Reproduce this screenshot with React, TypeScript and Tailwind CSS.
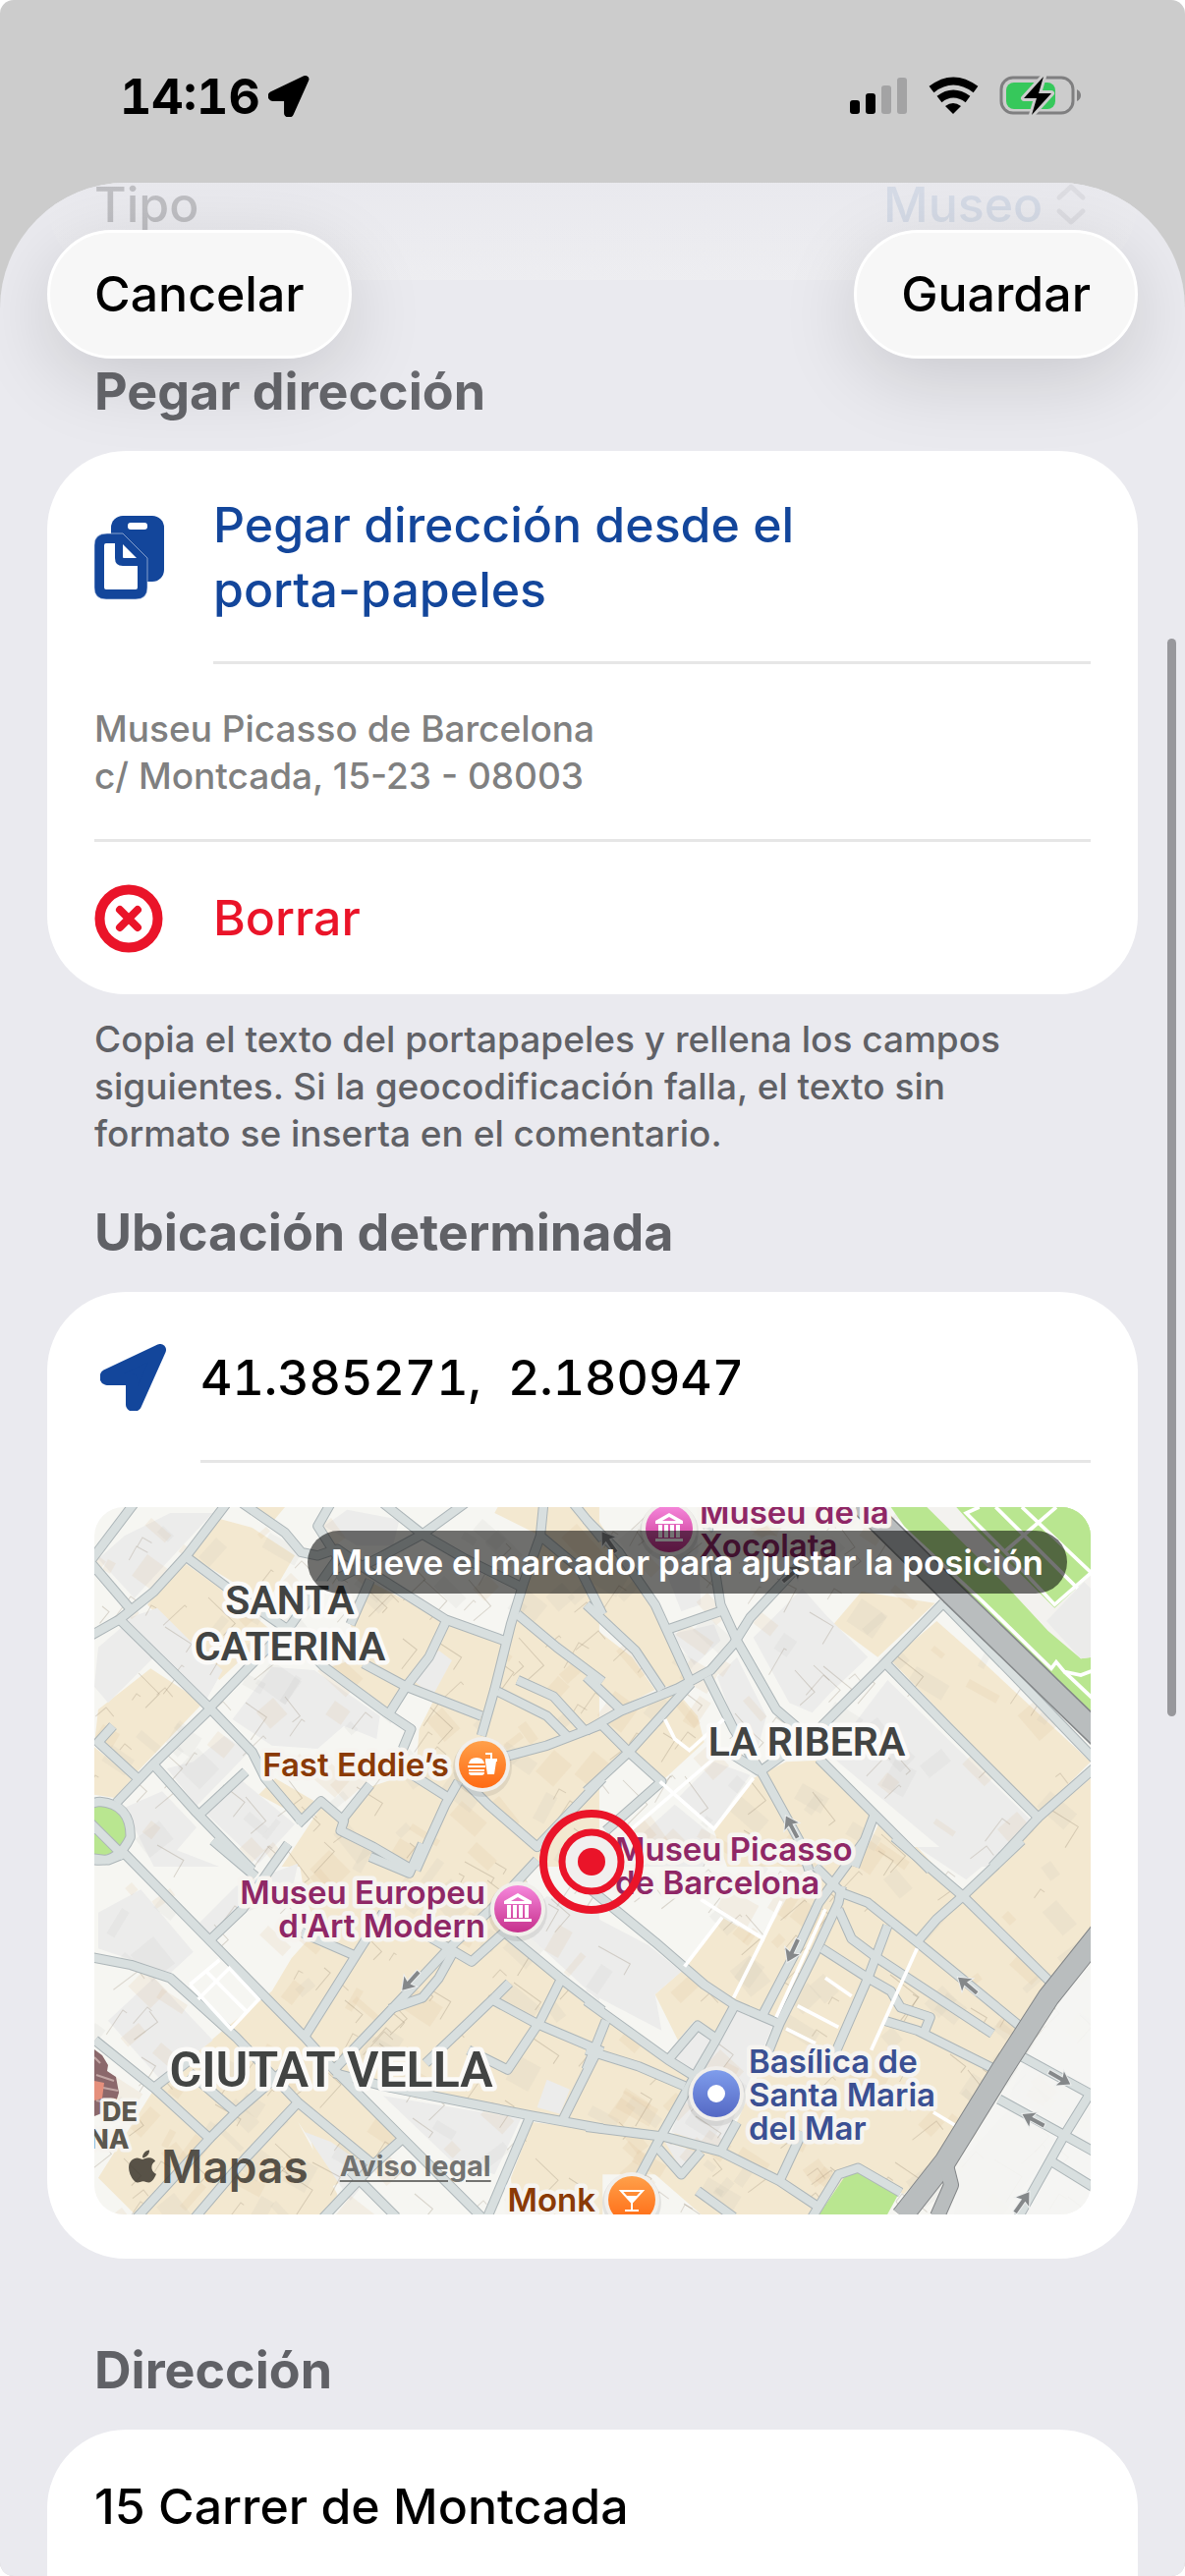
import type { ReactNode } from "react";
import { FaApple } from "react-icons/fa";

interface MapTile {
  x: number;
  y: number;
  blocks: string[];
  grey: string[];
  roads: string[];
  paths: string[];
}

// The map is drawn as four tiles, each in thirds of a map unit
const TILES: MapTile[] = [
  {
    x: -6,
    y: -14,
    blocks: [
      "M390 75 L500 105 L630 190 L545 335 L310 190Z",
      "M290 210 L430 310 L560 420 L400 570 L180 340Z",
      "M190 535 L350 640 L150 850 L20 750 L30 660Z",
      "M18 775 L135 870 L80 930 L18 920Z",
      "M870 275 L1090 390 L1260 460 L1380 130 L1240 60 L1250 42 H1560 V1140 H590 L715 950 L775 985 L850 900 L1000 850 L1010 720 L1060 620 L970 590 L920 660 L740 530 L830 500 L800 400Z",
      "M570 870 L690 940 L650 990 L520 920Z",
      "M500 42 H600 L560 90Z",
    ],
    grey: [
      "M560 530 L690 540 L890 680 L880 750 L780 710 L700 780 L560 770 L440 690Z",
      "M110 130 L250 60 L380 60 L250 200 L140 320 L30 200Z",
      "M110 385 L210 350 L310 450 L410 540 L360 630Z",
      "M30 470 L100 410 L200 500 L60 640 L18 590Z",
      "M320 820 L415 740 L490 790 L330 955 L240 840Z",
      "M110 960 L225 910 L330 1020 L270 1090 L400 1140 H200Z",
      "M350 970 L460 870 L630 1010 L520 1130Z",
      "M980 560 L1070 480 L1110 510 L1050 620Z",
      "M720 100 L790 50 L950 80 L930 160 L820 160Z",
    ],
    roads: [
      "M0 215 L140 30",
      "M-20 450 L95 385 L200 300 L300 190 L430 20",
      "M10 215 L125 350",
      "M95 385 L370 655 L500 790 L540 870 L650 1000",
      "M300 195 L420 285 L600 410 L720 530 L910 670 L985 720 L960 780",
      "M370 655 L500 520 L620 400 L690 300 L760 200",
      "M370 660 L200 825 L85 945",
      "M200 830 L330 975 L500 1150",
      "M340 980 L480 850",
      "M75 710 L30 760 L150 870",
      "M470 30 L600 120 L650 180 L700 190 L760 170 L860 240 L1090 385 L1270 450",
      "M860 265 L800 400",
      "M900 30 L1020 125 L1150 30",
      "M760 260 L900 190 L1020 125 L1150 200 L1320 285",
      "M740 30 L700 100 L770 210",
      "M1390 30 L1380 130 L1330 270 L1290 400 L1240 600 L1200 740",
      "M1090 395 L1040 500 L970 590 L920 670",
      "M840 520 L970 590 L1200 680",
      "M1310 370 L1430 470 L1570 575",
      "M1250 605 L1400 680 L1470 750",
      "M1310 570 L1420 620 L1520 730",
      "M1250 810 L1400 770 L1570 705",
      "M1130 880 L1090 950 L1040 1060 L1000 1150",
      "M1150 880 L1220 950 L1370 1080 L1570 870",
      "M990 860 L1100 930",
      "M640 1010 L710 940 L780 1000 L770 1030 L870 1080 L990 1150",
      "M780 990 L860 890",
      "M1380 130 L1500 230 L1570 370",
      "M1480 30 L1570 140",
      "M-40 1110 Q-60 950 35 942 Q130 950 128 1050 Q90 1130 18 1120",
      "M0 1000 L110 1110",
    ],
    paths: [],
  },
  {
    x: 504,
    y: -14,
    blocks: [
      "M0 42 L90 180 L200 340 L310 580 L230 590 L140 460 L0 330Z",
      "M0 400 L130 500 L200 600 L100 650 L0 570Z",
      "M0 720 L270 610 L330 680 L350 760 L220 880 L110 800 L0 900Z",
      "M745 400 L830 300 L1055 335 L880 500Z",
      "M920 510 L1060 390 L1190 505 L1530 820 L1370 980Z",
      "M540 850 L600 820 L700 815 L865 980 L800 1140 H420 L380 1030 L500 870Z",
      "M885 1005 L1010 1140 H820Z",
      "M1375 1000 L1530 870 V1140 H1250Z",
    ],
    grey: [
      "M910 570 L1350 1000 L1230 1140 H1140 L735 800Z",
      "M500 440 L650 290 L720 370 L850 500 L735 610 L680 670 L610 640Z",
      "M250 430 L380 400 L400 450 L320 525Z",
      "M390 560 L450 500 L540 680 L500 830 L440 700Z",
      "M270 930 L380 820 L490 860 L380 1020Z",
      "M150 1050 L260 950 L370 1040 L350 1140 H150Z",
      "M190 130 L330 130 L340 340 L280 360Z",
    ],
    roads: [
      "M-10 340 L140 480 L220 600",
      "M-10 560 L95 660",
      "M-10 725 L95 665 L270 595 L370 540 L440 460 L490 380 L640 220",
      "M-10 80 L90 180 L200 340 L310 580",
      "M240 415 L400 360",
      "M350 30 L400 340 L450 450 L570 660 L640 720",
      "M360 560 L440 720 L530 860 L640 1060 L670 1150",
      "M-10 910 L120 790 L310 580",
      "M40 710 L120 790 L220 880 L50 1030",
      "M1080 335 L900 520 L700 720 L520 850",
      "M440 800 L520 850",
      "M1080 335 L1300 560 L1540 810",
      "M905 520 L1100 720 L1370 990 L1540 840",
      "M700 810 L870 980 L1040 1150",
      "M1370 990 L1230 1140",
      "M870 980 L810 1140",
    ],
    paths: [
      "M230 690 L260 750 L305 785 L410 690",
      "M215 880 L380 1025 L500 870",
      "M100 1050 L380 810",
    ],
  },
  {
    x: -6,
    y: 346,
    blocks: [
      "M640 20 L720 0 H1380 L1270 260 L1440 400 L1570 500 V860 L1350 820 L900 720 L750 690 L950 880 L870 970 L720 1050 L680 900 L640 840 L760 1060 L740 1140 H160 L30 1010 L200 740 L410 560 L560 440 L620 340 L700 250 L660 150Z",
      "M1355 840 L1570 865 V1140 H1300 L1290 1010Z",
    ],
    grey: [
      "M330 240 L450 120 L640 50 L620 140 L480 200 L380 290Z",
      "M30 200 L160 130 L320 320 L250 385 L30 310Z",
      "M60 530 L200 400 L380 590 L220 710Z",
      "M1310 240 L1400 150 L1560 200 V470Z",
      "M900 760 L1320 830 L1240 1000 L1110 960Z",
      "M1400 710 L1470 740 L1440 815 L1370 795Z",
      "M660 870 L740 900 L870 990 L800 1080Z",
    ],
    roads: [
      "M-20 30 L60 40 L110 20 L370 285 L660 580 L750 680 L950 880 L1220 1150",
      "M0 335 L130 360 L250 400 L450 580 L640 780 L870 970 L960 890",
      "M370 285 L470 190 L560 60 L610 -10",
      "M380 -20 L510 90",
      "M660 580 L830 310 L900 200",
      "M650 260 L810 330",
      "M750 680 L950 470 L1100 310 L1240 180 L1370 40",
      "M860 30 L980 80 L1020 -10",
      "M920 495 L1020 460 L1070 400 L1120 310",
      "M1000 250 L1170 350 L1270 260 L1440 400 L1570 500",
      "M1030 660 L1240 460 L1285 415",
      "M1240 470 L1370 540 L1570 625",
      "M1440 410 L1380 530 L1280 680 L1160 620",
      "M750 690 L900 730 L1350 820 L1570 860",
      "M1350 820 L1210 1150",
      "M1555 620 L1450 830",
      "M20 590 L200 735 L370 890 L140 1140",
      "M200 735 L310 650",
      "M310 690 L450 810 L600 680",
      "M450 810 L370 890",
      "M640 780 L480 950 L310 1150",
      "M870 970 L700 1150",
      "M800 990 L940 1130",
    ],
    paths: [
      "M310 420 L400 345 M335 465 L430 370 L520 465 L435 555 L310 420",
      "M360 380 L480 500",
    ],
  },
  {
    x: 504,
    y: 346,
    blocks: [
      "M405 215 L530 285 L600 160 L700 70 L840 0 H1000 L1140 150 L1310 0 H1540 V230 L1400 430 L1060 960 L960 1060 L800 980 L690 1130 H350 L200 1000 L-10 1000 V480 L240 650 L330 700 L230 880 L450 840 L540 640 L580 540 L440 480 L290 370Z",
      "M200 450 L280 380 L430 485 L390 570 L320 530 L270 590Z",
    ],
    grey: [
      "M450 495 L560 545 L400 920 L250 870 L300 740Z",
      "M-10 200 L180 300 L280 380 L200 450 L220 560 L-10 440Z",
      "M230 900 L340 935 L280 985Z",
      "M250 650 L330 555 L370 590 L310 690Z",
      "M1290 790 L1430 900 L1250 1140 H1110 L1130 960Z",
      "M1330 660 L1510 750 L1450 860 L1280 760Z",
      "M1000 0 H1270 L1150 100Z",
    ],
    roads: [
      "M-70 70 L200 290 L350 420 L440 480 L580 540",
      "M-10 470 L240 650 L320 700",
      "M240 650 L330 545 L380 580",
      "M-10 620 L150 670 L290 730",
      "M50 530 L-10 680",
      "M440 490 L380 600 L310 720 L220 880 L140 1030",
      "M530 510 L640 300 L700 170 L840 -20",
      "M540 640 L580 540 L690 320 L760 170 L770 120",
      "M690 60 L770 140 L850 170 L1000 290 L1330 560",
      "M930 -30 L1140 150 L1420 425",
      "M1320 -20 L1140 150 L1060 220 L1000 290",
      "M760 190 L800 280 L880 340 L1230 570",
      "M710 310 L850 400 L920 440 L950 490 L1040 520 L1020 570",
      "M910 240 L850 400 L750 630",
      "M900 530 L1000 560 L1240 680",
      "M-10 855 L230 885 L400 930 L580 1020 L700 1100",
      "M400 930 L450 840",
      "M210 920 L280 1000 L340 930",
      "M580 1020 L650 870",
      "M330 1050 L440 1130",
      "M680 1130 L760 1000 L820 980 L950 1055",
      "M1320 640 L1540 760",
      "M1250 770 L1450 880 L1540 930",
      "M1530 750 L1450 880 L1310 1130",
      "M1410 960 L1540 1040",
    ],
    paths: [
      "M340 160 L530 280 L585 165 M405 215 L290 365",
      "M530 280 L440 460",
      "M720 190 L570 520",
      "M720 400 L800 455 M635 485 L760 550 M600 555 L690 600",
      "M1000 310 L860 620",
      "M1050 810 L1125 855",
    ],
  },
];

// x, y and heading of the one-way arrows
const ARROWS = [
  [710, 326, -28],
  [524, 36, -35],
  [710, 68, 50],
  [322, 482, 222],
  [711, 451, 205],
  [889, 487, -50],
  [982, 581, 120],
  [956, 624, -62],
  [944, 708, 35],
];

// Small building outlines, spread with a fixed seed so they never jump
function makeParcels(count: number) {
  let seed = 41385;
  const next = () => {
    seed = (seed * 16807) % 2147483647;
    return seed / 2147483647;
  };
  return Array.from({ length: count }, () => ({
    x: Math.round(next() * 1014),
    y: Math.round(next() * 720),
    w: Math.round(6 + next() * 34),
    h: Math.round(6 + next() * 26),
    angle: Math.round(28 + next() * 26),
    kind: Math.floor(next() * 4),
  }));
}

const PARCELS = makeParcels(620);

function tileTransform(tile: MapTile) {
  return `translate(${tile.x} ${tile.y}) scale(0.3333)`;
}

function Pin({
  x,
  y,
  fill,
  children,
}: {
  x: number;
  y: number;
  fill: string;
  children: ReactNode;
}) {
  return (
    <g transform={`translate(${x} ${y})`}>
      <circle cy="3" r="30" fill="#000" opacity="0.08" />
      <circle r="28" fill="#f1efeb" />
      <circle r="24" fill={fill} />
      {children}
    </g>
  );
}

function MuseumGlyph() {
  return (
    <g fill="#fff">
      <path
        fillRule="evenodd"
        d="M0 -16 L14 -8 V-5 H-14 V-8Z M0 -12 L-7 -8 H7Z"
      />
      <path d="M-11 -4h4v13h-4z M-5 -4h4v13h-4z M1 -4h4v13h-4z M7 -4h4v13h-4z M-14 10h28v3h-28z" />
    </g>
  );
}

function MapLabel({
  x,
  y,
  lines,
  color,
  anchor = "start",
}: {
  x: number;
  y: number;
  lines: string[];
  color: string;
  anchor?: "start" | "middle" | "end";
}) {
  return (
    <text
      textAnchor={anchor}
      fill={color}
      stroke="#f6f4f0"
      strokeWidth="9"
      strokeLinejoin="round"
      paintOrder="stroke"
      className="text-[33px] font-semibold"
    >
      {lines.map((line, i) => (
        <tspan key={line} x={x} y={y + i * 34}>
          {line}
        </tspan>
      ))}
    </text>
  );
}

function DistrictLabel({
  x,
  y,
  size,
  children,
}: {
  x: number;
  y: number;
  size: string;
  children: string;
}) {
  return (
    <text
      x={x}
      y={y}
      textAnchor="middle"
      fill="#424443"
      stroke="#fbfaf8"
      strokeWidth="9"
      strokeLinejoin="round"
      paintOrder="stroke"
      className={`font-['Roboto',sans-serif] font-semibold ${size}`}
    >
      {children}
    </text>
  );
}

function StreetMap() {
  return (
    <svg
      viewBox="0 0 1014 720"
      preserveAspectRatio="xMidYMid slice"
      className="block size-full"
      role="img"
      aria-label="Mapa de Ciutat Vella, Barcelona"
    >
      <defs>
        <linearGradient id="pin-pink" x1="0" y1="0" x2="0" y2="1">
          <stop offset="0" stopColor="#f688dc" />
          <stop offset="1" stopColor="#c6308c" />
        </linearGradient>
        <linearGradient id="pin-orange" x1="0" y1="0" x2="0" y2="1">
          <stop offset="0" stopColor="#ffa04a" />
          <stop offset="1" stopColor="#ff6a13" />
        </linearGradient>
        <linearGradient id="pin-blue" x1="0" y1="0" x2="0" y2="1">
          <stop offset="0" stopColor="#7f9dec" />
          <stop offset="1" stopColor="#5468c4" />
        </linearGradient>
      </defs>

      <rect width="1014" height="720" fill="#f6f6f2" />

      {TILES.map((tile, i) => (
        <g key={i} transform={tileTransform(tile)}>
          {tile.blocks.map((d) => (
            <path key={d} d={d} fill="#f3e8d0" />
          ))}
          {tile.grey.map((d) => (
            <path key={d} d={d} fill="#ececeb" />
          ))}
        </g>
      ))}

      {PARCELS.map((p, i) => (
        <g key={i} transform={`translate(${p.x} ${p.y}) rotate(${p.angle})`}>
          {p.kind === 0 && (
            <rect width={p.w} height={p.h} fill="#d9b98f" opacity="0.14" />
          )}
          {p.kind === 1 && (
            <path
              d={`M0 0H${p.w}V${p.h}`}
              fill="none"
              stroke="#8a7a66"
              opacity="0.28"
            />
          )}
          {p.kind === 2 && (
            <path
              d={`M0 ${p.h}V0H${Math.round(p.w / 3)}`}
              fill="none"
              stroke="#8a7a66"
              opacity="0.24"
            />
          )}
          {p.kind === 3 && (
            <rect width={p.w} height={p.h} fill="#9c9c9c" opacity="0.07" />
          )}
        </g>
      ))}

      {/* parks */}
      <g transform="translate(504 -14) scale(0.3333)">
        <path d="M920 42 H1540 V720 L1100 300Z" fill="#b9e690" />
        <path
          d="M1030 42 H1120 L1180 110 L1420 350 L1540 240 V500 L1500 505 L1400 420 L1270 280Z"
          fill="#f3f2ef"
        />
        <path d="M1180 42 L1150 60 L1420 345 L1540 240 V42Z" fill="#b9e690" />
        <path d="M1395 390 L1510 270 L1540 300 V500 L1500 505Z" fill="#ebebea" />
        <g fill="none" stroke="#fff" strokeWidth="11">
          <path d="M930 80 L1200 330 L1410 535 L1425 515 L1450 545 L1500 555 L1540 540" />
          <path d="M1450 545 L1540 630" />
          <path d="M1190 42 L1150 60 L1270 180 L1420 340 L1540 235" />
          <path d="M1265 180 L1425 42 M1240 42 L1490 290 M1320 42 L1540 250" />
        </g>
      </g>
      <g transform="translate(-6 -14) scale(0.3333)">
        <ellipse cx="35" cy="1030" rx="82" ry="76" fill="#b9e690" />
      </g>
      <path
        d="M736 722 L762 684 Q768 676 778 678 L818 700 L806 722Z"
        fill="#b9e690"
      />
      <path
        d="M1014 455 L858 700 L850 720 H1014Z"
        fill="#f5f5f3"
        opacity="0.9"
      />

      {TILES.map((tile, i) => (
        <g
          key={i}
          transform={tileTransform(tile)}
          fill="none"
          stroke="#acb5b8"
          strokeWidth="31"
          strokeLinejoin="round"
        >
          {tile.roads.map((d) => (
            <path key={d} d={d} />
          ))}
        </g>
      ))}
      {TILES.map((tile, i) => (
        <g
          key={i}
          transform={tileTransform(tile)}
          fill="none"
          stroke="#d8dfdf"
          strokeWidth="25"
          strokeLinejoin="round"
        >
          {tile.roads.map((d) => (
            <path key={d} d={d} />
          ))}
        </g>
      ))}
      {TILES.map((tile, i) => (
        <g
          key={i}
          transform={tileTransform(tile)}
          fill="none"
          stroke="#fff"
          strokeWidth="11"
        >
          {tile.paths.map((d) => (
            <path key={d} d={d} />
          ))}
        </g>
      ))}

      {/* main avenues */}
      <g fill="none" strokeLinejoin="round">
        <g stroke="#838688">
          <path d="M780 -4 L871 86 L1030 240" strokeWidth="25" />
          <path d="M1030 425 L971 499 L924 572 L866 666 L822 722" strokeWidth="23" />
          <path d="M866 666 L872 690 L858 722" strokeWidth="16" />
        </g>
        <g stroke="#b9bdbe">
          <path d="M780 -4 L871 86 L1030 240" strokeWidth="22" />
          <path d="M1030 425 L971 499 L924 572 L866 666 L822 722" strokeWidth="21" />
          <path d="M866 666 L872 690 L858 722" strokeWidth="14" />
        </g>
      </g>

      {ARROWS.map(([x, y, angle]) => (
        <path
          key={`${x}-${y}`}
          transform={`translate(${x} ${y}) rotate(${angle})`}
          d="M0 -13 L8 -1 L2 -3 V12 H-2 V-3 L-8 -1Z"
          fill="#85888a"
          stroke="#eceeee"
          strokeWidth="2"
          paintOrder="stroke"
        />
      ))}

      {/* cathedral landmark */}
      <g>
        <path
          d="M0 552 L8 558 L14 568 L13 574 L22 580 L25 596 L20 612 L0 620Z"
          fill="#8b686b"
        />
        <path
          d="M0 560 L6 566 M2 578 L20 584 M4 590 L24 594 M2 604 L22 608"
          stroke="#c2a6a4"
          strokeWidth="2"
        />
        <path d="M0 584 L10 586 L8 602 L0 604Z" fill="#e58f7c" />
      </g>
      <text
        fill="#5c584f"
        stroke="#f6f4f0"
        strokeWidth="7"
        strokeLinejoin="round"
        paintOrder="stroke"
        className="text-[27px] font-extrabold"
      >
        <tspan x="8" y="625">
          DE
        </tspan>
        <tspan x="-6" y="653">
          NA
        </tspan>
      </text>

      <DistrictLabel x={199} y={109} size="text-[41px]">
        SANTA
      </DistrictLabel>
      <DistrictLabel x={199} y={156} size="text-[41px]">
        CATERINA
      </DistrictLabel>
      <DistrictLabel x={725} y={253} size="text-[41px]">
        LA RIBERA
      </DistrictLabel>
      <DistrictLabel x={241} y={590} size="text-[50px]">
        CIUTAT VELLA
      </DistrictLabel>

      <MapLabel
        x={616}
        y={17}
        lines={["Museu de la", "Xocolata"]}
        color="#8f2766"
      />
      <MapLabel
        x={361}
        y={274}
        anchor="end"
        lines={["Fast Eddie’s"]}
        color="#8a3a06"
      />
      <MapLabel
        x={398}
        y={404}
        anchor="end"
        lines={["Museu Europeu", "d'Art Modern"]}
        color="#8f2766"
      />
      <MapLabel
        x={530}
        y={360}
        lines={["Museu Picasso", "de Barcelona"]}
        color="#8f2766"
      />
      <MapLabel
        x={666}
        y={576}
        lines={["Basílica de", "Santa Maria", "del Mar"]}
        color="#3b5093"
      />
      <MapLabel x={510} y={717} anchor="end" lines={["Monk"]} color="#8a3a06" />

      <Pin x={585} y={22} fill="url(#pin-pink)">
        <MuseumGlyph />
      </Pin>
      <Pin x={431} y={409} fill="url(#pin-pink)">
        <MuseumGlyph />
      </Pin>
      <Pin x={395} y={262} fill="url(#pin-orange)">
        <g fill="#fff">
          <path d="M-14 -1 Q-13 -7 -6 -7 Q1 -7 2 -1Z M-15 1h18v2h-18z M-14 5h16v2h-16z M-14 8h16q0 3 -3 3h-10q-3 0 -3 -3z" />
          <path d="M3 -6h12v3h-1l-2 13h-7l-2 -13z" />
          <path d="M9 -6 V-11 H3" fill="none" stroke="#fff" strokeWidth="2" />
        </g>
      </Pin>
      <Pin x={633} y={597} fill="url(#pin-blue)">
        <circle r="9" fill="#fff" />
      </Pin>
      <Pin x={547} y={705} fill="url(#pin-orange)">
        <path
          d="M-11 -9 H11 L0 3Z M0 3 V11 M-7 11 H7"
          fill="none"
          stroke="#fff"
          strokeWidth="2"
        />
        <path d="M-6 -4 H6 L0 3Z" fill="#fff" />
      </Pin>

      {/* draggable marker */}
      <circle cx="506" cy="361" r="30" fill="#f1efee" />
      <g fill="none" stroke="#ea1429">
        <circle cx="506" cy="361" r="49" strokeWidth="8" />
        <circle cx="506" cy="361" r="30" strokeWidth="7" />
      </g>
      <circle cx="506" cy="361" r="14" fill="#ea1429" />
    </svg>
  );
}

function LocationArrow({ className }: { className: string }) {
  return (
    <svg viewBox="0 0 68 68" className={className} aria-hidden="true">
      <path
        d="M61 6 L6 32 Q5 35 7 36 H32 V62 Q34 64 36 62Z"
        fill="currentColor"
        stroke="currentColor"
        strokeWidth="12"
        strokeLinejoin="round"
      />
    </svg>
  );
}

function StatusBar() {
  return (
    <div className="flex h-[186px] shrink-0 items-start justify-between pt-[68px] pr-[106px] pl-[122px]">
      <div className="flex items-center gap-2 text-[50px] leading-[60px] font-bold tabular-nums">
        <span>14:16</span>
        <LocationArrow className="size-[42px]" />
      </div>
      <svg
        viewBox="0 0 236 44"
        className="mt-[8px] h-[44px] w-[236px]"
        aria-hidden="true"
      >
        <rect x="1" y="26" width="10" height="14" rx="3" />
        <rect x="17" y="19" width="10" height="21" rx="3" />
        <rect x="33" y="11" width="10" height="29" rx="3" fill="#a3a3a4" />
        <rect x="49" y="3" width="10" height="37" rx="3" fill="#a3a3a4" />
        <g fill="none" stroke="#000" strokeWidth="8">
          <path d="M84 15 Q106 -2 129 15" />
          <path d="M92 25 Q106 14 121 25" />
        </g>
        <path d="M98 32 Q106 26 114 32 L106 40Z" />
        <rect
          x="155"
          y="3"
          width="73"
          height="36"
          rx="12"
          fill="none"
          stroke="#7f7f80"
          strokeWidth="3"
        />
        <path d="M232 15 Q236 17 236 21 Q236 25 232 27Z" fill="#7f7f80" />
        <rect x="160" y="8" width="50" height="27" rx="8" fill="#36c85b" />
        <path
          d="M198 2 L178 24 H191 L186 41 L206 19 H193Z"
          stroke="#ccc"
          strokeWidth="6"
          strokeLinejoin="round"
          paintOrder="stroke"
        />
      </svg>
    </div>
  );
}

function PasteIcon() {
  return (
    <svg viewBox="0 0 72 86" className="h-[86px] w-[72px]" aria-hidden="true">
      <rect x="17" y="0" width="54" height="67" rx="12" fill="currentColor" />
      <rect x="34" y="7" width="20" height="7" rx="3" fill="#fff" />
      <path
        d="M13 18 H29 L54 43 V73 Q54 85 42 85 H12 Q0 85 0 73 V30 Q0 18 13 18Z"
        fill="currentColor"
        stroke="#d5def0"
        strokeWidth="0.6"
      />
      <path
        d="M12 28 H21 V43 Q21 51 29 51 H44 V73 Q44 75 42 75 H12 Q10 75 10 73 V30 Q10 28 12 28Z"
        fill="#fff"
      />
      <path d="M29 29 L43 43 H30 Q29 43 29 42Z" fill="#fff" />
    </svg>
  );
}

function ClearIcon() {
  return (
    <svg viewBox="0 0 70 70" className="size-[70px]" aria-hidden="true">
      <g fill="none" stroke="currentColor">
        <circle cx="35" cy="35" r="29.5" strokeWidth="10" />
        <path
          d="M26 26 L44 44 M44 26 L26 44"
          strokeWidth="8"
          strokeLinecap="round"
        />
      </g>
    </svg>
  );
}

function SectionTitle({ children }: { children: string }) {
  return (
    <h2 className="px-12 pb-[30px] text-[52px] leading-[60px] font-bold text-[#606166]">
      {children}
    </h2>
  );
}

export default function App() {
  return (
    <div className="bg-white font-['Inter','Liberation_Sans',sans-serif] text-black">
      <div className="flex h-screen flex-col overflow-hidden rounded-[14px] bg-[#ccc]">
        <StatusBar />

        <div className="relative min-h-0 flex-1 overflow-hidden rounded-t-[128px] bg-[#eaeaef]">
          <header className="absolute inset-x-0 top-0 z-10 flex justify-between bg-linear-to-b from-[#eaeaef]/20 to-transparent px-12 pt-12 pb-[90px]">
            <button
              type="button"
              className="h-[131px] rounded-full border-[3px] border-white bg-[#f7f7f7] px-[45px] text-[50px] font-medium shadow-[0_20px_80px_rgba(0,0,0,0.14)]"
            >
              Cancelar
            </button>
            <button
              type="button"
              className="h-[131px] rounded-full border-[3px] border-white bg-[#f7f7f7] px-[45px] text-[50px] font-medium shadow-[0_20px_80px_rgba(0,0,0,0.14)]"
            >
              Guardar
            </button>
          </header>

          <main className="px-12">
            <div className="flex h-[99px] items-start justify-between rounded-b-[80px] bg-linear-to-b from-[#e9e9ee] to-[#eeeef1] px-12 text-[50px] leading-[44px] font-medium">
              <label htmlFor="tipo" className="text-[#b5b5b9]">
                Tipo
              </label>
              <div className="flex items-center gap-3">
                <select
                  id="tipo"
                  className="appearance-none bg-transparent text-[#d0d7e4]"
                  defaultValue="museo"
                >
                  <option value="museo">Museo</option>
                </select>
                <svg
                  viewBox="0 0 36 44"
                  className="h-[44px] w-[36px]"
                  fill="none"
                  stroke="#dadadf"
                  strokeWidth="5"
                  strokeLinecap="round"
                  strokeLinejoin="round"
                  aria-hidden="true"
                >
                  <path d="M4 15 L16 4 L28 15 M4 29 L16 40 L28 29" />
                </svg>
              </div>
            </div>

            <section className="pt-[84px]">
              <SectionTitle>Pegar dirección</SectionTitle>
              <div className="rounded-[80px] bg-white px-12">
                <button
                  type="button"
                  className="flex w-full items-center gap-[49px] text-left text-[#13469b]"
                >
                  <PasteIcon />
                  <span className="flex-1 border-b-[3px] border-[#e6e6e6] pt-[42px] pb-[40px] text-[50px] leading-[66px] font-medium">
                    Pegar dirección desde el
                    <br />
                    porta-papeles
                  </span>
                </button>
                <p className="border-b-[3px] border-[#e6e6e6] pt-[42px] pb-[40px] text-[37px] leading-[48px] font-medium text-[#808080]">
                  Museu Picasso de Barcelona
                  <br />
                  c/ Montcada, 15-23 - 08003
                </p>
                <button
                  type="button"
                  className="flex h-[155px] w-full items-center gap-[51px] text-left text-[50px] font-medium text-[#ea1429]"
                >
                  <ClearIcon />
                  Borrar
                </button>
              </div>
              <p className="px-12 pt-[22px] text-[37px] leading-[48px] font-medium text-[#606166]">
                Copia el texto del portapapeles y rellena los campos
                <br />
                siguientes. Si la geocodificación falla, el texto sin
                <br />
                formato se inserta en el comentario.
              </p>
            </section>

            <section className="pt-[47px]">
              <SectionTitle>Ubicación determinada</SectionTitle>
              <div className="rounded-[80px] bg-white px-12 pb-[45px]">
                <div className="flex items-center gap-[34px] pl-[6px]">
                  <LocationArrow className="size-[68px] text-[#13469b]" />
                  <p className="flex-1 border-b-[3px] border-[#e6e6e6] pt-[57px] pb-[54px] text-[50px] leading-[60px] font-medium whitespace-pre tabular-nums">
                    41.385271,  2.180947
                  </p>
                </div>
                <div className="relative mt-[45px] aspect-[1014/720] overflow-hidden rounded-[30px]">
                  <StreetMap />
                  <p className="absolute top-6 right-6 flex h-[64px] items-center rounded-full bg-black/55 px-6 text-[35px] font-semibold text-white">
                    Mueve el marcador para ajustar la posición
                  </p>
                  <div className="absolute bottom-[21px] left-[30px] flex items-center gap-8 text-[#3c372f]/85">
                    <span className="flex items-center text-[46px] leading-[56px] font-semibold">
                      <FaApple className="size-[38px]" />
                      Mapas
                    </span>
                    <a
                      href="#aviso-legal"
                      className="text-[29px] leading-[40px] font-bold text-[#5d5d5b]/85 underline underline-offset-4"
                    >
                      Aviso legal
                    </a>
                  </div>
                </div>
              </div>
            </section>

            <section className="pt-[84px]">
              <SectionTitle>Dirección</SectionTitle>
              <div className="rounded-t-[80px] bg-white px-12 pt-[48px] pb-[60px]">
                <input
                  type="text"
                  aria-label="Dirección"
                  defaultValue="15 Carrer de Montcada"
                  className="w-full text-[50px] leading-[60px] font-medium outline-none"
                />
              </div>
            </section>
          </main>

          <div className="absolute top-[464px] right-[9px] h-[1097px] w-[9px] rounded-full bg-[#98989c]" />
        </div>
      </div>
    </div>
  );
}
